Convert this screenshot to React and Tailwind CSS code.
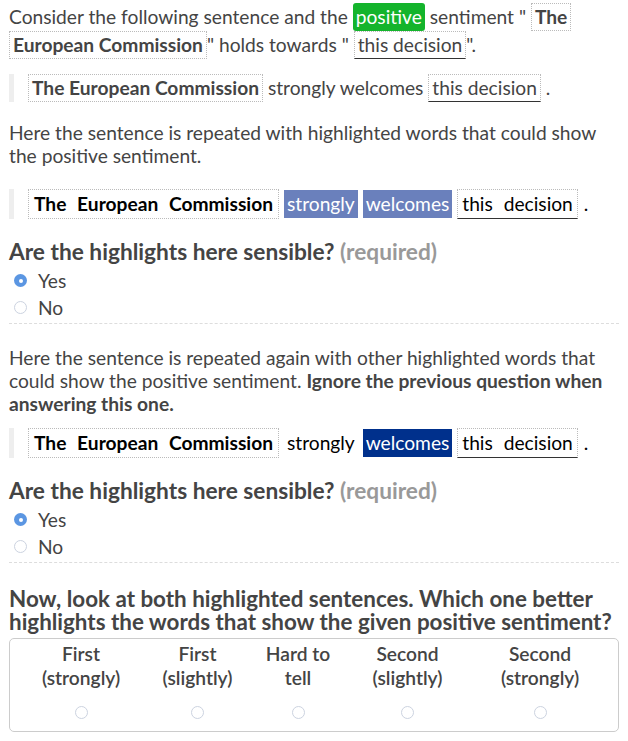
const Box = ({ children, underline, className = '' }) => (
  <span
    className={`inline-block border border-dotted border-[#bbb] px-[3px] leading-[26px] ${className}`}
    style={underline ? { borderBottomStyle: 'solid', borderBottomColor: '#333' } : undefined}
  >
    {children}
  </span>
);

const Word = ({ children, bg }) => (
  <span className={`inline-block px-[3px] leading-[28px] ${bg || ''}`}>{children}</span>
);

const Highlighted = ({ strong }) => (
  <div className="flex items-center border-l-[5px] border-[#eee] pl-[14px]">
    <div className="text-black">
      <span className="inline-block border border-dotted border-[#bbb] px-[2px] font-bold">
        <Word>The</Word> <Word>European</Word> <Word>Commission</Word>
      </span>{' '}
      {strong ? (
        <>
          <Word bg="bg-[#6a80bc] text-white">strongly</Word>{' '}
        </>
      ) : (
        <>
          <Word>strongly</Word>{' '}
        </>
      )}
      <Word bg={strong ? 'bg-[#6a80bc] text-white' : 'bg-[#00308c] text-white'}>welcomes</Word>{' '}
      <span
        className="inline-block border border-dotted border-[#bbb] px-[1px]"
        style={{ borderBottomStyle: 'solid', borderBottomColor: '#333' }}
      >
        <Word>this</Word> <Word>decision</Word>
      </span>
      <span className="ml-[6px]">.</span>
    </div>
  </div>
);

const Radio = ({ checked, label }) => (
  <label className="flex h-[27px] items-center gap-[11px] pl-[5px]">
    {checked ? (
      <span className="flex h-[13px] w-[13px] items-center justify-center rounded-full bg-[#5b96e2]">
        <span className="h-[4px] w-[4px] rounded-full bg-white" />
      </span>
    ) : (
      <span className="h-[13px] w-[13px] rounded-full border border-[#ccd3e0] bg-white" />
    )}
    <span>{label}</span>
  </label>
);

const Question = () => (
  <div>
    <h2 className="mt-[19px] text-[22.7px] font-bold leading-[28px] text-[#444]">
      Are the highlights here sensible? <span className="text-[#999]">(required)</span>
    </h2>
    <div className="mt-[1px]">
      <Radio checked label="Yes" />
      <Radio label="No" />
    </div>
    <div className="mt-[2px] border-t border-dashed border-[#ddd]" />
  </div>
);

const columns = [
  ['First', '(strongly)'],
  ['First', '(slightly)'],
  ['Hard to', 'tell'],
  ['Second', '(slightly)'],
  ['Second', '(strongly)'],
];

export default function App() {
  return (
    <div
      className="w-[628px] bg-white px-[9px] pt-[3px] text-[19.2px] leading-[23px] text-[#444]"
      style={{ fontFamily: 'Lato, "Noto Sans", sans-serif' }}
    >
      <p>
        Consider the following sentence and the{' '}
        <span className="inline-block rounded-[3px] bg-[#14b42c] px-[3px] leading-[28px] text-white">positive</span>{' '}
        sentiment "{' '}
        <Box className="font-bold">The</Box>
        <br />
        <Box className="font-bold">European Commission</Box>" holds towards "{' '}
        <Box underline>this decision</Box>".
      </p>

      <div className="mt-[15px] flex items-center border-l-[5px] border-[#eee] pl-[14px]">
        <div>
          <Box className="font-bold">The European Commission</Box> strongly welcomes{' '}
          <Box underline>this decision</Box> .
        </div>
      </div>

      <p className="mt-[19px]">
        Here the sentence is repeated with highlighted words that could show the positive sentiment.
      </p>

      <div className="mt-[22px]">
        <Highlighted strong />
      </div>

      <Question />

      <p className="mt-[22px]">
        Here the sentence is repeated again with other highlighted words that could show the positive
        sentiment. <span className="font-bold">Ignore the previous question when answering this one.</span>
      </p>

      <div className="mt-[13px]">
        <Highlighted />
      </div>

      <Question />

      <h2 className="mt-[24px] text-[22.4px] font-bold leading-[23px] text-[#444]">
        Now, look at both highlighted sentences. Which one better highlights the words that show the given
        positive sentiment?
      </h2>

      <div className="mt-[5px] grid grid-cols-[142px_91px_110px_109px_1fr] rounded-[5px] border border-[#ccc] pb-[12px] pt-[3px] font-semibold">
        {columns.map(([a, b]) => (
          <div key={a + b} className="flex flex-col items-center text-center">
            <span>{a}</span>
            <span className="mt-[1px]">{b}</span>
            <span className="mt-[17px] h-[13px] w-[13px] rounded-full border border-[#ccd3e0]" />
          </div>
        ))}
      </div>
    </div>
  );
}
